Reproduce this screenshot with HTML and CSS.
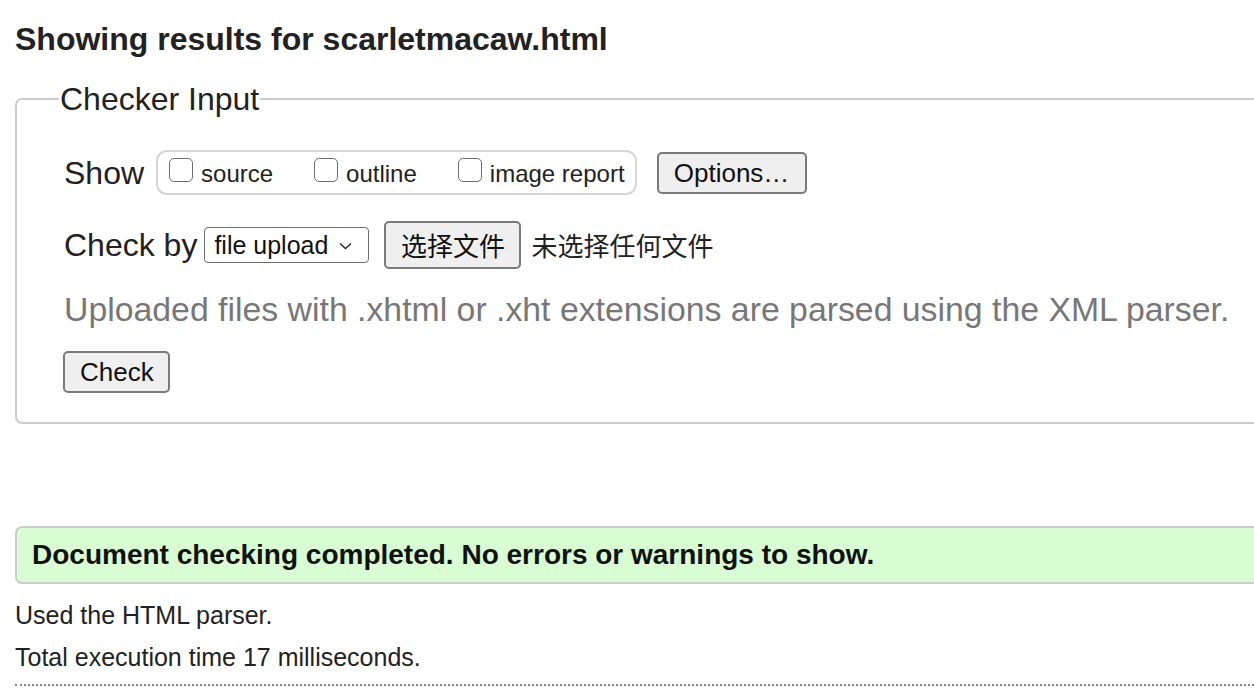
FILE: index.html
```html
<!DOCTYPE html>
<html lang="en">
<head>
<meta charset="utf-8">
<title>Showing results for scarletmacaw.html</title>
<link rel="stylesheet" href="styles.css">
</head>
<body>
<h2 class="title">Showing results for scarletmacaw.html</h2>
<fieldset class="checker">
  <legend class="legend">Checker Input</legend>
  <div class="row row-show">
    <span class="label">Show</span>
    <div class="group">
      <label class="opt"><span class="box"></span><span class="opt-text">source</span></label>
      <label class="opt"><span class="box"></span><span class="opt-text">outline</span></label>
      <label class="opt"><span class="box"></span><span class="opt-text">image report</span></label>
    </div>
    <button class="btn btn-options" type="button">Options…</button>
  </div>
  <div class="row row-by">
    <span class="label">Check by</span>
    <div class="select"><span class="select-text">file upload</span><svg class="chev" width="13" height="8" viewBox="0 0 13 8"><polyline points="1,1.5 6.5,6.5 12,1.5" fill="none" stroke="#222" stroke-width="1.3"/></svg></div>
    <button class="btn btn-file" type="button">选择文件</button>
    <span class="nofile">未选择任何文件</span>
  </div>
  <p class="hint">Uploaded files with .xhtml or .xht extensions are parsed using the XML parser.</p>
  <div class="row row-check">
    <button class="btn btn-check" type="button">Check</button>
  </div>
</fieldset>
<div class="success">Document checking completed. No errors or warnings to show.</div>
<p class="stat stat-first">Used the HTML parser.</p>
<p class="stat">Total execution time 17 milliseconds.</p>
<div class="dotted"></div>
</body>
</html>
```
FILE: styles.css
```css
html, body {
  margin: 0;
  padding: 0;
  overflow: hidden;
  background: #fff;
}
body {
  padding: 0 0 0 15px;
  font-family: "Liberation Sans", Arial, "Noto Sans CJK SC", sans-serif;
  color: #222;
}
.title {
  margin: 20px 0 0 0;
  font-size: 32px;
  line-height: 38px;
  font-weight: bold;
  color: #222;
}
.checker {
  margin: 22px 0 0 0;
  width: calc(100% + 40px);
  box-sizing: border-box;
  border: 2px solid #ccc;
  border-radius: 7px;
  padding: 0 0 29px 47px;
  min-width: 0;
}
.legend {
  font-size: 32px;
  line-height: 38px;
  padding: 0 1px;
  margin-left: -5px;
  color: #222;
}
.row {
  display: flex;
  align-items: center;
}
.row-show {
  margin-top: 32px;
  height: 45px;
}
.label {
  font-size: 32px;
  line-height: 38px;
  color: #222;
}
.row-show .label {
  margin-right: 12px;
}
.group {
  display: flex;
  align-items: center;
  height: 45px;
  box-sizing: border-box;
  border: 2px solid #d6d6d6;
  border-radius: 11px;
  padding: 0 10px 0 11px;
}
.opt {
  display: flex;
  align-items: center;
  margin-right: 41px;
}
.opt:last-child {
  margin-right: 0;
}
.box {
  width: 24px;
  height: 24px;
  box-sizing: border-box;
  border: 1.5px solid #6e6e6e;
  border-radius: 5px;
  background: #fff;
  margin: 0 8px 6px 0;
}
.opt-text {
  font-size: 24px;
  line-height: 30px;
  margin-top: 2px;
  color: #222;
}
.btn {
  font-family: "Liberation Sans", Arial, "Noto Sans CJK SC", sans-serif;
  font-size: 26px;
  color: #111;
  background: #efefef;
  border: 2px solid #7a7a7a;
  border-radius: 5px;
  height: 42px;
  padding: 0 15px;
  margin: 0;
  box-sizing: border-box;
  line-height: 36px;
}
.btn-options {
  margin-left: 20px;
  width: 150px;
}
.row-by {
  margin-top: 26px;
  height: 48px;
}
.row-by .label {
  margin-right: 7px;
}
.select {
  display: flex;
  align-items: center;
  width: 165px;
  height: 36px;
  box-sizing: border-box;
  border: 1.5px solid #6e6e6e;
  border-radius: 4px;
  padding: 0 0 0 9px;
  background: #fff;
}
.select-text {
  font-size: 25px;
  line-height: 30px;
  color: #111;
}
.chev {
  margin-left: 11px;
  margin-top: 2px;
}
.btn-file {
  margin-left: 15px;
  width: 137px;
  height: 48px;
  font-family: "Noto Sans CJK SC", sans-serif;
  font-size: 26px;
  line-height: 44px;
  padding: 0;
}
.nofile {
  margin-left: 10px;
  font-family: "Noto Sans CJK SC", sans-serif;
  font-size: 26px;
  line-height: 36px;
  color: #222;
}
.hint {
  margin: 21px 0 0 0;
  font-size: 33.8px;
  line-height: 38px;
  color: #777;
}
.row-check {
  margin-top: 23px;
  height: 42px;
}
.btn-check {
  width: 107px;
  margin-left: -1px;
}
.success {
  margin-top: 102px;
  width: calc(100% + 40px);
  box-sizing: border-box;
  background: #d8fdd2;
  border: 2px solid #ccc;
  border-radius: 7px;
  padding: 10px 0 10px 15px;
  font-size: 28px;
  line-height: 34px;
  font-weight: bold;
  color: #111;
}
.stat {
  margin: 12px 0;
  font-size: 25px;
  line-height: 30px;
  color: #222;
}
.stat-first {
  margin-top: 16px;
}
.dotted {
  width: calc(100% + 40px);
  border-top: 2px dotted #888;
  margin-top: 11px;
}
```
